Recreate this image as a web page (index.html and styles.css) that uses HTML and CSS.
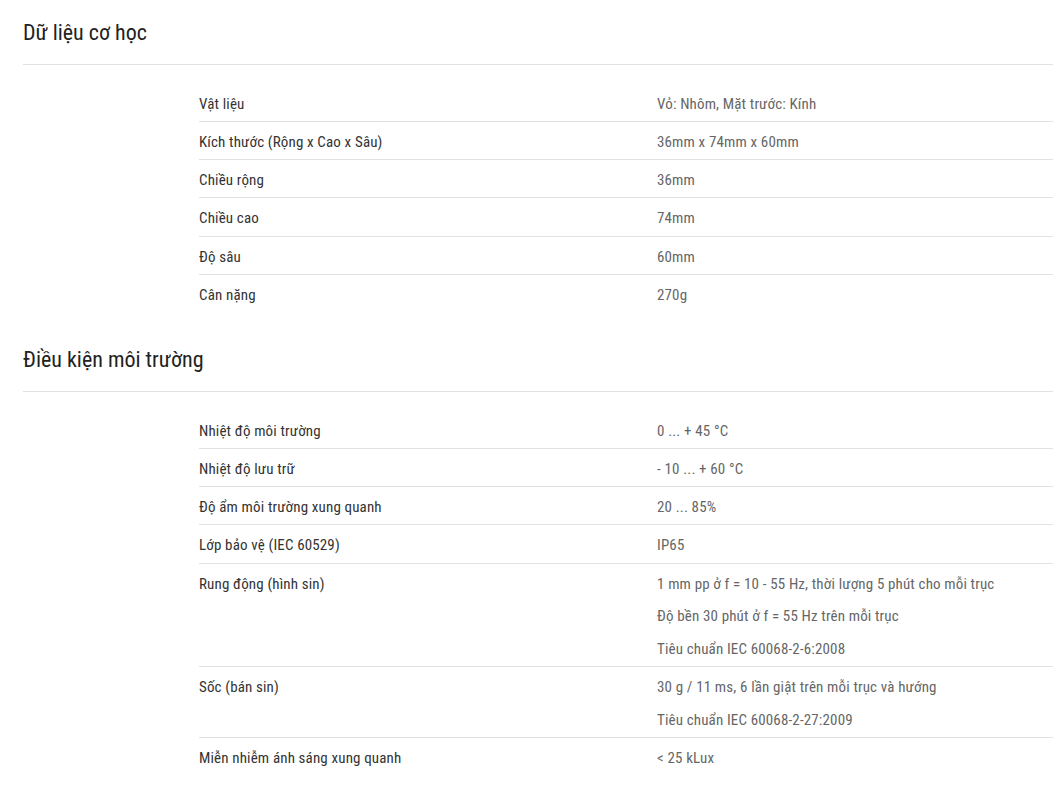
FILE: index.html
```html
<!DOCTYPE html>
<html lang="vi">
<head>
<meta charset="utf-8">
<title>Thông số</title>
<link rel="stylesheet" href="styles.css">
</head>
<body>
<div class="page">
  <section class="group">
    <h2 class="group-title">Dữ liệu cơ học</h2>
    <div class="specs">
      <div class="row"><div class="label">Vật liệu</div><div class="value"><p>Vỏ: Nhôm, Mặt trước: Kính</p></div></div>
      <div class="row"><div class="label">Kích thước (Rộng x Cao x Sâu)</div><div class="value"><p>36mm x 74mm x 60mm</p></div></div>
      <div class="row"><div class="label">Chiều rộng</div><div class="value"><p>36mm</p></div></div>
      <div class="row"><div class="label">Chiều cao</div><div class="value"><p>74mm</p></div></div>
      <div class="row"><div class="label">Độ sâu</div><div class="value"><p>60mm</p></div></div>
      <div class="row"><div class="label">Cân nặng</div><div class="value"><p>270g</p></div></div>
    </div>
  </section>
  <section class="group">
    <h2 class="group-title">Điều kiện môi trường</h2>
    <div class="specs">
      <div class="row"><div class="label">Nhiệt độ môi trường</div><div class="value"><p>0 ... + 45 °C</p></div></div>
      <div class="row"><div class="label">Nhiệt độ lưu trữ</div><div class="value"><p>- 10 ... + 60 °C</p></div></div>
      <div class="row"><div class="label">Độ ẩm môi trường xung quanh</div><div class="value"><p>20 ... 85%</p></div></div>
      <div class="row"><div class="label">Lớp bảo vệ (IEC 60529)</div><div class="value"><p>IP65</p></div></div>
      <div class="row"><div class="label">Rung động (hình sin)</div><div class="value"><p>1 mm pp ở f = 10 - 55 Hz, thời lượng 5 phút cho mỗi trục</p><p>Độ bền 30 phút ở f = 55 Hz trên mỗi trục</p><p>Tiêu chuẩn IEC 60068-2-6:2008</p></div></div>
      <div class="row"><div class="label">Sốc (bán sin)</div><div class="value"><p>30 g / 11 ms, 6 lần giật trên mỗi trục và hướng</p><p>Tiêu chuẩn IEC 60068-2-27:2009</p></div></div>
      <div class="row"><div class="label">Miễn nhiễm ánh sáng xung quanh</div><div class="value"><p>&lt; 25 kLux</p></div></div>
    </div>
  </section>
</div>
</body>
</html>
```
FILE: styles.css
```css
* { box-sizing: border-box; }
html, body {
  margin: 0;
  padding: 0;
  background: #ffffff;
}
body {
  font-family: "Roboto Condensed", Roboto, "Liberation Sans", sans-serif;
  color: #333333;
}
.page {
  padding: 0 1px 0 23px;
}
.group-title {
  margin: 0;
  padding: 19px 0 17px;
  font-size: 22px;
  line-height: 28px;
  font-weight: 400;
  color: #222222;
  border-bottom: 1px solid #e2e2e2;
}
.specs {
  margin: 18px 0 0 176px;
  padding-bottom: 15px;
}
.row {
  display: flex;
  border-top: 1px solid #e2e2e2;
  padding: 10px 0 7px;
  font-size: 15px;
  line-height: 20.15px;
  letter-spacing: 0.15px;
}
.row:first-child {
  border-top-color: transparent;
}
.label {
  width: 458px;
  flex: none;
  color: #333333;
}
.value {
  flex: 1;
  color: #666666;
}
.value p {
  margin: 0;
}
.value p + p {
  margin-top: 12.5px;
}
```
